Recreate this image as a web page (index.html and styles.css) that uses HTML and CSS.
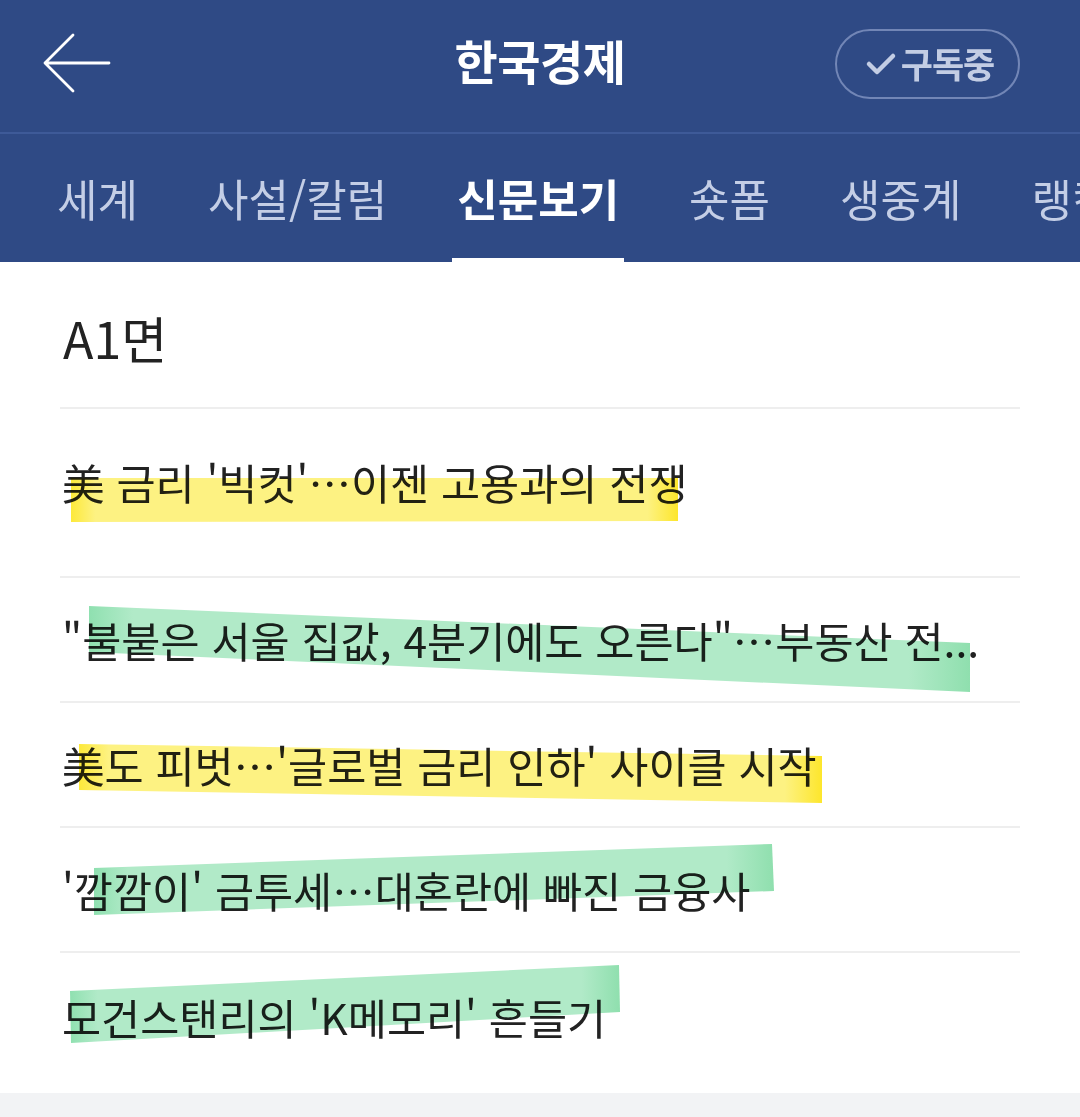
FILE: index.html
```html
<!DOCTYPE html>
<html lang="ko">
<head>
  <meta charset="UTF-8">
  <meta name="viewport" content="width=device-width, initial-scale=1.0">
  <title>한국경제 - 신문보기</title>
  <link rel="stylesheet" href="styles.css">
</head>
<body>
  <header class="topbar">
    <a class="back" href="#" aria-label="뒤로">
      <svg width="70" height="62" viewBox="0 0 70 62" fill="none" stroke="#ffffff" stroke-width="2.8" stroke-linecap="round" stroke-linejoin="round">
        <path d="M67 30H3M31 2L3 30L31 58"/>
      </svg>
    </a>
    <h1 class="title">한국경제</h1>
    <button class="subscribe">
      <svg width="32" height="26" viewBox="0 0 32 26" fill="none" stroke="#c3cde4" stroke-width="4.5" stroke-linecap="round" stroke-linejoin="round">
        <path d="M4 13L12 21L28 5"/>
      </svg>
      <span>구독중</span>
    </button>
  </header>

  <nav class="tabs">
    <a href="#" class="tab">세계</a>
    <a href="#" class="tab">사설/칼럼</a>
    <a href="#" class="tab active">신문보기</a>
    <a href="#" class="tab">숏폼</a>
    <a href="#" class="tab">생중계</a>
    <a href="#" class="tab">랭킹</a>
  </nav>

  <main class="paper">
    <h2 class="page-name">A1면</h2>
    <ul class="news">
      <li class="item first"><a href="#">美 금리 '빅컷'…이젠 고용과의 전쟁</a></li>
      <li class="item"><a href="#">"불붙은 서울 집값, 4분기에도 오른다"…부동산 전...</a></li>
      <li class="item"><a href="#">美도 피벗…'글로벌 금리 인하' 사이클 시작</a></li>
      <li class="item"><a href="#">'깜깜이' 금투세…대혼란에 빠진 금융사</a></li>
      <li class="item last"><a href="#">모건스탠리의 'K메모리' 흔들기</a></li>
    </ul>
  </main>
  <div class="bottom-strip"></div>

  <!-- highlighter marks drawn over the list -->
  <svg class="marks" width="1080" height="1117" viewBox="0 0 1080 1117">
    <defs>
      <linearGradient id="yel" x1="0" x2="1" y1="0" y2="0">
        <stop offset="0" stop-color="#fde93a"/>
        <stop offset="0.04" stop-color="#fdf282"/>
        <stop offset="0.95" stop-color="#fdf282"/>
        <stop offset="1" stop-color="#fde62c"/>
      </linearGradient>
      <linearGradient id="grn" x1="0" x2="1" y1="0" y2="0">
        <stop offset="0" stop-color="#8fe0b0"/>
        <stop offset="0.05" stop-color="#b1eac8"/>
        <stop offset="0.93" stop-color="#b1eac8"/>
        <stop offset="1" stop-color="#8fdfae"/>
      </linearGradient>
    </defs>
    <polygon fill="url(#yel)" points="71,478 678,478 678,521 71,522"/>
    <polygon fill="url(#grn)" points="89,606 970,643 970,692 89,652"/>
    <polygon fill="url(#yel)" points="79,744 822,756 822,803 79,790"/>
    <polygon fill="url(#grn)" points="94,868 772,844 774,891 94,915"/>
    <polygon fill="url(#grn)" points="70,991 619,965 620,1012 71,1043"/>
  </svg>
</body>
</html>
```

FILE: styles.css
```css
* {
  box-sizing: border-box;
}
body {
  margin: 0;
  padding: 0;
  width: 1080px;
  min-height: 1117px;
  font-family: 'Noto Sans CJK KR', 'Noto Sans', sans-serif;
  background: #ffffff;
  color: #222222;
  position: relative;
  overflow: hidden;
}
a {
  color: inherit;
  text-decoration: none;
}

/* top bar */
.topbar {
  height: 134px;
  background-color: #2f4a85;
  border-bottom: 2px solid #3e5a98;
  display: flex;
  align-items: center;
  position: relative;
  padding: 0 60px 4px 42px;
}
.back {
  display: flex;
  width: 70px;
  height: 62px;
}
.title {
  position: absolute;
  left: 0;
  right: 0;
  top: 32px;
  margin: 0;
  line-height: 1.2;
  text-align: center;
  font-size: 47px;
  font-weight: 700;
  color: #ffffff;
  letter-spacing: -0.5px;
  pointer-events: none;
}
.subscribe {
  margin-left: auto;
  width: 185px;
  height: 70px;
  border: 2px solid #7286b6;
  border-radius: 35px;
  background: transparent;
  display: flex;
  align-items: center;
  justify-content: center;
  gap: 4px;
  color: #c3cde4;
  font-family: inherit;
  font-size: 35px;
  font-weight: 700;
  letter-spacing: -1px;
  padding: 0 0 4px 4px;
  position: relative;
  z-index: 1;
}
.subscribe svg {
  margin-top: 4px;
}

/* category tabs */
.tabs {
  height: 128px;
  background-color: #2f4a85;
  display: flex;
  align-items: stretch;
  gap: 60px;
  padding-left: 52px;
  white-space: nowrap;
  overflow: hidden;
}
.tab {
  display: flex;
  align-items: center;
  padding: 8px 5px 4px;
  font-size: 44px;
  color: #c4cee6;
  border-bottom: 4px solid transparent;
}
.tab.active {
  color: #ffffff;
  font-weight: 700;
  border-bottom-color: #ffffff;
}

/* paper list */
.paper {
  padding: 0 60px;
}
.page-name {
  margin: 0;
  height: 145px;
  display: flex;
  align-items: center;
  padding: 4px 0 0 3px;
  font-size: 50px;
  font-weight: 400;
  color: #222222;
}
.news {
  list-style: none;
  margin: 0;
  padding: 0;
}
.item {
  border-top: 2px solid #eeeeee;
  height: 125px;
  display: flex;
  align-items: center;
  padding: 0 0 0 2px;
  font-size: 42.5px;
  color: #222222;
}
.item a {
  display: block;
  white-space: nowrap;
  position: relative;
  z-index: 2;
}
.item.first {
  height: 169px;
  padding-bottom: 22px;
}
.item.last {
  height: 142px;
  padding-bottom: 14px;
}
.bottom-strip {
  height: 30px;
  background-color: #f2f3f5;
}

.marks {
  position: absolute;
  top: 0;
  left: 0;
  mix-blend-mode: multiply;
  pointer-events: none;
  z-index: 3;
}
```
